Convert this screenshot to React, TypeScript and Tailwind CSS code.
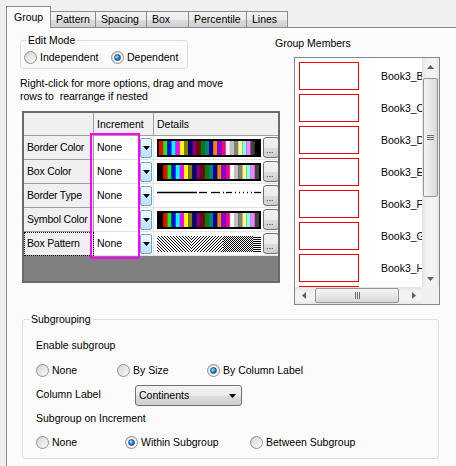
import React from "react";

const COLORS = [
  "#000000", "#ff0000", "#00ff00", "#0000ff", "#00ffff", "#ff00ff", "#ffff00", "#808000",
  "#000080", "#800080", "#800000", "#008000", "#008080", "#0000a0", "#ff8000", "#8000ff",
  "#ff0080", "#ffffff", "#c0c0c0", "#808080", "#ffff80", "#80ffff", "#ff80ff", "#404040",
];

function ColorBar({ start }: { start: number }) {
  const seq = [...COLORS.slice(start), ...COLORS.slice(0, start)];
  const w = 100 / seq.length;
  return (
    <svg width="104" height="18" className="block shrink-0">
      <rect x="0" y="0" width="104" height="18" fill="#000" />
      {seq.map((c, i) => (
        <rect key={i} x={2 + i * w} y="2" width={w + 0.05} height="14" fill={c} />
      ))}
    </svg>
  );
}

function BorderTypes() {
  const segs: [number, number][] = [
    [0, 40], [42, 50], [54, 63], [66, 67], [69, 75], [78, 79], [82, 83], [86, 87], [90, 91], [94, 95], [97, 104],
  ];
  return (
    <svg width="104" height="18" className="block shrink-0">
      {segs.map(([a, b], i) => (
        <line key={i} x1={a} x2={b} y1="5.5" y2="5.5" stroke="#000" strokeWidth="1.3" />
      ))}
    </svg>
  );
}

function Patterns() {
  return (
    <svg width="104" height="18" className="block shrink-0" shapeRendering="crispEdges">
      <defs>
        <pattern id="pa" width="3" height="3" patternUnits="userSpaceOnUse">
          <rect x="0" y="0" width="1" height="1" fill="#000" />
          <rect x="1" y="1" width="1" height="1" fill="#000" />
          <rect x="2" y="2" width="1" height="1" fill="#000" />
        </pattern>
        <pattern id="pb" width="3" height="3" patternUnits="userSpaceOnUse">
          <rect x="2" y="0" width="1" height="1" fill="#000" />
          <rect x="1" y="1" width="1" height="1" fill="#000" />
          <rect x="0" y="2" width="1" height="1" fill="#000" />
        </pattern>
        <pattern id="pc" width="2" height="2" patternUnits="userSpaceOnUse">
          <rect x="0" y="0" width="1" height="1" fill="#000" />
          <rect x="1" y="1" width="1" height="1" fill="#000" />
        </pattern>
        <pattern id="pd" width="2" height="2" patternUnits="userSpaceOnUse">
          <rect x="0" y="0" width="2" height="1" fill="#000" />
        </pattern>
      </defs>
      <rect x="0" y="1" width="34" height="16" fill="url(#pa)" />
      <rect x="34" y="1" width="32" height="16" fill="url(#pb)" />
      <rect x="66" y="1" width="30" height="16" fill="url(#pc)" />
      <rect x="96" y="1" width="8" height="16" fill="url(#pd)" />
    </svg>
  );
}

function DownTri({ fill = "#000" }: { fill?: string }) {
  return (
    <svg width="7" height="4" className="block">
      <path d="M0 0H7L3.5 4Z" fill={fill} />
    </svg>
  );
}

function Radio({ checked }: { checked?: boolean }) {
  return (
    <span className="w-[13px] h-[13px] shrink-0 rounded-full border border-[#8e8f8f] bg-[linear-gradient(135deg,#cfcfcf,#fdfdfd)] flex items-center justify-center">
      {checked ? (
        <span className="w-[9px] h-[9px] rounded-full bg-white flex items-center justify-center">
          <span className="w-[7px] h-[7px] rounded-full border border-[#1a4c84] bg-[radial-gradient(circle_at_35%_35%,#b4e8ff,#2b8fd4_45%,#0b3a74)]" />
        </span>
      ) : (
        <span className="w-[9px] h-[9px] rounded-full bg-[linear-gradient(135deg,#d9d9d9,#f7f7f7)]" />
      )}
    </span>
  );
}

function RadioItem({ label, checked, w }: { label: string; checked?: boolean; w: string }) {
  return (
    <div className={`flex items-center gap-[3px] ${w}`}>
      <Radio checked={checked} />
      <span>{label}</span>
    </div>
  );
}

function DropBtn() {
  return (
    <div className="ml-auto mr-[1px] w-[12px] h-[20px] border border-[#6aa5d0] rounded-[2px] bg-[linear-gradient(180deg,#f2f9fe,#e2f3fd_50%,#cdebfb_51%,#b8e0f6)] flex items-center justify-center">
      <DownTri />
    </div>
  );
}

function DotsBtn() {
  return (
    <div className="ml-[2px] w-[16px] h-[21px] shrink-0 border border-[#707070] rounded-[3px] bg-[linear-gradient(180deg,#f2f2f2,#ebebeb_50%,#dddddd_51%,#cfcfcf)] flex items-end pl-[2px] pb-[3px]">
      <span className="text-[9px] leading-[8px] text-[#5a2a2a]">...</span>
    </div>
  );
}

type Row = { name: string; detail: React.ReactNode; focus?: boolean };

const ROWS: Row[] = [
  { name: "Border Color", detail: <ColorBar start={1} /> },
  { name: "Box Color", detail: <ColorBar start={0} /> },
  { name: "Border Type", detail: <BorderTypes /> },
  { name: "Symbol Color", detail: <ColorBar start={0} /> },
  { name: "Box Pattern", detail: <Patterns />, focus: true },
];

function Table() {
  return (
    <div className="ml-[2px] mt-[8px] w-[258px] h-[172px] border-2 border-[#6b6b6b] bg-[#808080] relative flex flex-col overflow-hidden">
      <div className="grid grid-cols-[70px_60px_124px] h-[23px]">
        <div className="bg-[#f0f0f0] border-r border-b border-[#a0a0a0]" />
        <div className="bg-[#f0f0f0] border-r border-b border-[#a0a0a0] flex items-center pl-[3px]">Increment</div>
        <div className="bg-[#f0f0f0] border-b border-[#a0a0a0] flex items-center pl-[3px]">Details</div>
      </div>
      {ROWS.map((r) => (
        <div key={r.name} className="grid grid-cols-[70px_60px_124px] h-[24px]">
          <div
            className={
              r.focus
                ? "bg-[#f0f0f0] border-r border-b border-[#a0a0a0] flex items-center pl-[3px] tracking-[-0.2px] whitespace-nowrap overflow-hidden outline-1 outline-dotted outline-black -outline-offset-1"
                : "bg-[#f0f0f0] border-r border-b border-[#a0a0a0] flex items-center pl-[3px] tracking-[-0.2px] whitespace-nowrap overflow-hidden"
            }
          >
            {r.name}
          </div>
          <div className="bg-white border-r border-b border-[#e2e2e2] flex items-center pl-[3px]">
            <span>None</span>
            <DropBtn />
          </div>
          <div className="bg-white border-b border-[#e2e2e2] flex items-center pl-[3px]">
            {r.detail}
            <DotsBtn />
          </div>
        </div>
      ))}
      <div className="absolute left-[66px] top-[20px] w-[50px] h-[126px] border-2 border-[#ff00ff] pointer-events-none" />
    </div>
  );
}

function VScroll() {
  return (
    <div className="w-[17px] shrink-0 bg-[linear-gradient(90deg,#e2e2e2,#f1f1f1_25%,#f4f4f4_75%,#e6e6e6)] flex flex-col items-center">
      <div className="h-[17px] w-full flex items-center justify-center">
        <svg width="7" height="4" className="block">
          <path d="M3.5 0L7 4H0Z" fill="#606060" />
        </svg>
      </div>
      <div className="mt-[3px] w-[15px] h-[119px] rounded-[2px] border border-[#979797] bg-[linear-gradient(90deg,#f3f3f3,#e8e8e8_50%,#d6d6d6)] flex flex-col items-center justify-center gap-[1px]">
        <span className="w-[7px] h-[1px] bg-[#6d6d6d]" />
        <span className="w-[7px] h-[1px] bg-[#6d6d6d]" />
        <span className="w-[7px] h-[1px] bg-[#6d6d6d]" />
      </div>
      <div className="mt-auto h-[17px] w-full flex items-center justify-center">
        <DownTri fill="#606060" />
      </div>
    </div>
  );
}

function HScroll() {
  return (
    <div className="flex-1 h-[17px] bg-[linear-gradient(180deg,#e2e2e2,#f1f1f1_25%,#f4f4f4_75%,#e6e6e6)] flex items-center">
      <div className="w-[17px] h-full flex items-center justify-center">
        <svg width="4" height="7" className="block">
          <path d="M0 3.5L4 0V7Z" fill="#606060" />
        </svg>
      </div>
      <div className="ml-[3px] w-[84px] h-[15px] rounded-[2px] border border-[#979797] bg-[linear-gradient(180deg,#f3f3f3,#e8e8e8_50%,#d6d6d6)] flex items-center justify-center gap-[1px]">
        <span className="w-[1px] h-[7px] bg-[#6d6d6d]" />
        <span className="w-[1px] h-[7px] bg-[#6d6d6d]" />
        <span className="w-[1px] h-[7px] bg-[#6d6d6d]" />
      </div>
      <div className="ml-auto w-[17px] h-full flex items-center justify-center">
        <svg width="4" height="7" className="block">
          <path d="M4 3.5L0 0V7Z" fill="#606060" />
        </svg>
      </div>
    </div>
  );
}

const MEMBERS = ["Book3_B", "Book3_C", "Book3_D", "Book3_E", "Book3_F", "Book3_G", "Book3_H", "Book3_I"];

function MemberList() {
  return (
    <div className="ml-[19px] mt-[7px] w-[146px] h-[248px] border border-[#828790] bg-white flex flex-col">
      <div className="flex flex-1 min-h-0">
        <div className="flex-1 overflow-hidden pl-[4px] pt-[4px] flex flex-col gap-[4px]">
          {MEMBERS.map((m) => (
            <div key={m} className="flex items-center shrink-0 h-[28px]">
              <div className="w-[60px] h-[28px] shrink-0 border border-[#ff0000]" />
              <span className="ml-[22px] whitespace-nowrap">{m}</span>
            </div>
          ))}
        </div>
        <VScroll />
      </div>
      <div className="flex h-[17px]">
        <HScroll />
        <div className="w-[17px] h-[17px] bg-[#f0f0f0]" />
      </div>
    </div>
  );
}

function Tab({ label, cls }: { label: string; cls: string }) {
  return (
    <div className={`h-[16px] mb-[1px] border-t border-r border-[#898c95] bg-[linear-gradient(180deg,#f2f2f2,#ebebeb_50%,#dddddd_51%,#cfcfcf)] flex items-center pl-[5px] ${cls}`}>
      {label}
    </div>
  );
}

export default function App() {
  return (
    <div className="w-[456px] h-[466px] overflow-hidden bg-[#f0f0f0] font-['Liberation_Sans',Arial,sans-serif] text-[10.5px] leading-[13px] text-black flex flex-col">
      <div className="flex items-end h-[28px] pl-[6px] relative z-10 shrink-0">
        <div className="h-[22px] w-[45px] border-t border-l border-r border-[#898c95] bg-[#fbfbfb] flex items-center pl-[7px] pb-[1px]">
          Group
        </div>
        <Tab label="Pattern" cls="w-[45px]" />
        <Tab label="Spacing" cls="w-[51px]" />
        <Tab label="Box" cls="w-[42px]" />
        <Tab label="Percentile" cls="w-[58px]" />
        <Tab label="Lines" cls="w-[41px]" />
      </div>
      <div className="-mt-px ml-[6px] flex-1 border-l border-t border-[#898c95] bg-[#fbfbfb] pl-[13px] pt-[6px]">
        <div className="flex items-start">
          <div className="w-[260px] shrink-0 flex flex-col">
            <fieldset className="w-[167px] border border-[#d5dfe5] rounded-[3px] pb-[4px]">
              <legend className="ml-[5px] px-[2px] leading-[12px]">Edit Mode</legend>
              <div className="mt-[4px] pl-[3px] h-[14px] flex items-center">
                <RadioItem label="Independent" w="w-[87px]" />
                <RadioItem label="Dependent" checked w="w-[76px]" />
              </div>
            </fieldset>
            <div className="mt-[8px]">
              <div>Right-click for more options, drag and move</div>
              <div className="whitespace-pre">rows to  rearrange if nested</div>
            </div>
            <Table />
          </div>
          <div className="-ml-[5px] flex flex-col">
            <div className="mt-[3px]">Group Members</div>
            <MemberList />
          </div>
        </div>
        <fieldset className="mt-[8px] ml-[2px] w-[417px] border border-[#d5dfe5] rounded-[3px] pb-[9px]">
          <legend className="ml-[6px] px-[2px] leading-[12px]">Subgrouping</legend>
          <div className="pl-[13px] flex flex-col">
            <div className="mt-[13px] h-[14px] flex items-center">Enable subgroup</div>
            <div className="mt-[11px] h-[14px] flex items-center">
              <RadioItem label="None" w="w-[81px]" />
              <RadioItem label="By Size" w="w-[90px]" />
              <RadioItem label="By Column Label" checked w="w-[120px]" />
            </div>
            <div className="mt-[8px] h-[21px] flex items-center">
              <span className="w-[99px] -mt-[2px]">Column Label</span>
              <div className="w-[107px] h-[21px] border border-[#707070] rounded-[3px] bg-[linear-gradient(180deg,#f2f2f2,#ebebeb_50%,#dddddd_51%,#cfcfcf)] flex items-center pl-[3px] pr-[5px]">
                <span>Continents</span>
                <span className="ml-auto">
                  <DownTri />
                </span>
              </div>
            </div>
            <div className="mt-[5px] h-[14px] flex items-center">Subgroup on Increment</div>
            <div className="mt-[10px] h-[14px] flex items-center">
              <RadioItem label="None" w="w-[89px]" />
              <RadioItem label="Within Subgroup" checked w="w-[125px]" />
              <RadioItem label="Between Subgroup" w="w-[120px]" />
            </div>
          </div>
        </fieldset>
      </div>
    </div>
  );
}
